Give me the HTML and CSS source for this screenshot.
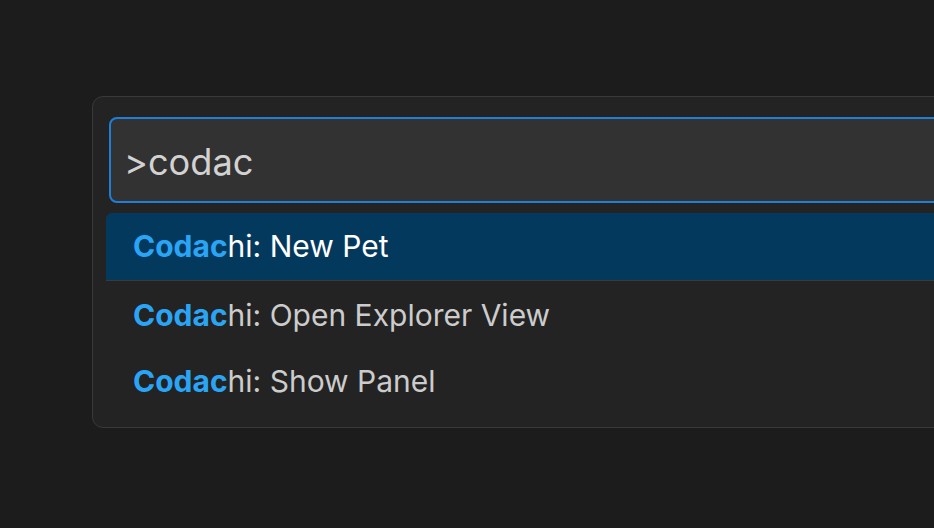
FILE: index.html
```html
<!DOCTYPE html>
<html lang="en">
<head>
<meta charset="utf-8">
<title>Command Palette</title>
<link rel="stylesheet" href="styles.css">
</head>
<body>
  <div class="palette">
    <div class="input">&gt;codac</div>
    <ul class="list">
      <li class="item selected"><span class="hl">Codac</span>hi: New Pet</li>
      <li class="item"><span class="hl">Codac</span>hi: Open Explorer View</li>
      <li class="item"><span class="hl">Codac</span>hi: Show Panel</li>
    </ul>
  </div>
</body>
</html>
```

FILE: styles.css
```css
html, body {
  margin: 0;
  height: 100%;
}
body {
  background: #1c1c1c;
  overflow: hidden;
  padding: 96px 0 0 92px;
  box-sizing: border-box;
  font-family: Inter, "Liberation Sans", sans-serif;
}
.palette {
  width: 1000px;
  box-sizing: border-box;
  background: #232323;
  border: 1px solid #393939;
  border-radius: 11px;
  padding: 20px 0 13px 13px;
}
.input {
  margin-left: 3px;
  height: 86px;
  box-sizing: border-box;
  border: 2px solid #1f7fd6;
  border-radius: 8px;
  background: #323232;
  color: #d2d2d2;
  font-size: 36.2px;
  line-height: 86px;
  padding-left: 13px;
}
.list {
  list-style: none;
  margin: 10px 0 0;
  padding: 0;
}
.item {
  height: 66px;
  line-height: 67px;
  padding-left: 27px;
  font-size: 30px;
  color: #cccccc;
  border-radius: 6px;
}
.item.selected {
  background: #04395e;
  color: #ffffff;
  height: 67px;
  line-height: 67px;
  margin-bottom: 2px;
  border-radius: 6px 0 0 0;
  box-shadow: 0 1px 0 #3a3a3a;
}
.hl {
  color: #2aa5f5;
  font-weight: 700;
}
```
